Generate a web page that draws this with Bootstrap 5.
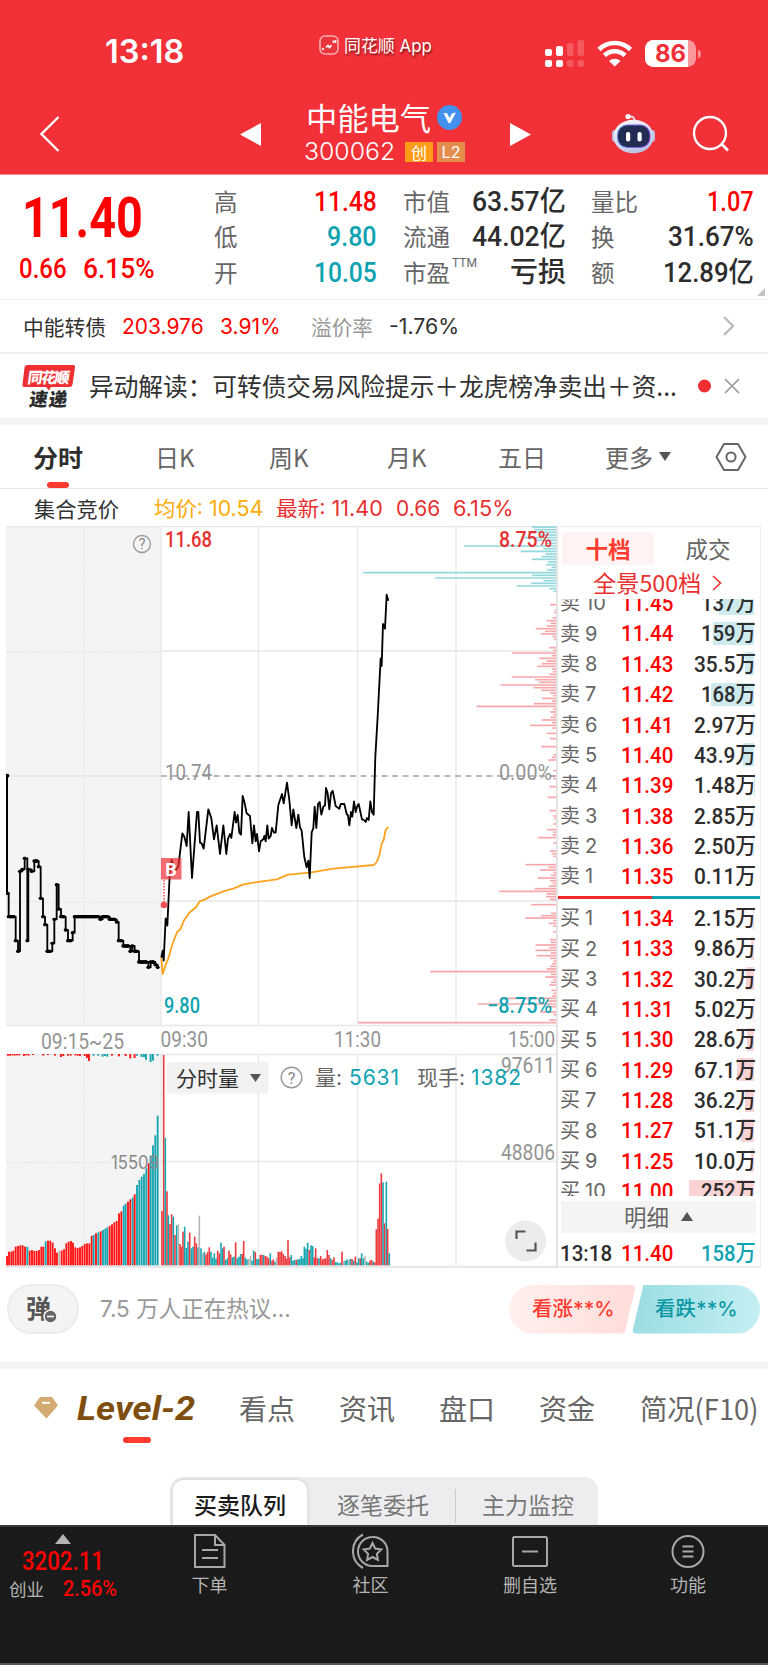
<!DOCTYPE html>
<html lang="zh-CN">
<head>
<meta charset="utf-8">
<meta name="viewport" content="width=device-width, initial-scale=1">
<title>中能电气 300062</title>
<link href="https://cdn.jsdelivr.net/npm/bootstrap@5.3.0/dist/css/bootstrap.min.css" rel="stylesheet">
<style>
:root{--up:#ff0000;--dn:#0fa3b1;--ink:#323232;--mut:#666}
body{font-family:"Noto Sans CJK SC",sans-serif;color:var(--ink);width:768px;height:1665px;overflow:hidden;background:#fff;line-height:1}
svg{display:block;flex:none}
.num{font-family:Roboto,"Noto Sans CJK SC",sans-serif;font-weight:500}
.sf{font-family:Inter,"Noto Sans CJK SC",sans-serif}
.up{color:var(--up)}.dn{color:var(--dn)}.soft{color:#e93030}.mut{color:var(--mut)}.ink{color:#2d2d2d}
[data-w]{display:inline-block;white-space:nowrap;transform-origin:0 50%}
/* header */
.top{background:#f23038;height:175px;border-bottom:1px solid #f98b8f;color:#fff}
.status{height:92px;padding:13px 0 0 105px}
.clock{font-size:32.5px;font-weight:600}
.appname{font-size:17.5px;text-shadow:1px 2px 2px #0007;margin-top:-14px}
.navline{height:82px;padding:2px 0 0 40px}
.title{font-size:31px;line-height:36px}
.codeline{font-size:24px;line-height:24px;margin-top:5px}
.tag{width:28px;height:20px;font-size:16px;background:#ff9c1a;line-height:20px;text-align:center}
.tag.l2{background:#e48d4c}
/* quote */
.quote{height:125px;border-bottom:1px solid #f1f1f1;display:grid;grid-template-columns:214px 189px 188px 177px;position:relative}
.big{font-size:56px;font-weight:700;line-height:55px;margin:16px 0 0 22px}
.chg{font-size:28.5px;margin:9px 0 0 19px}
.cells{padding-top:8.5px}
.cell{height:35.5px;display:flex;align-items:center;justify-content:space-between;font-size:23.5px;line-height:35px}
.cell .num{font-size:28.5px}
.cell .num i{font-style:normal;font-size:28px}
.ttm{font-size:12px;font-family:Roboto;margin:-18px auto 0 2px}
.fold{position:absolute;right:3px;bottom:3px;border:4.5px solid #c4c4c4;border-top-color:transparent;border-left-color:transparent}
.bond{height:54px;border-bottom:2px solid #efefef;font-size:21px;padding-left:23px;display:grid;grid-template-columns:99px 98px 91px 78px 334px auto;align-items:center}
.news{height:64px;padding-left:22px;font-size:24.5px}
.band{height:7px;background:#f4f4f4}
/* chart tabs */
.ctabs{height:64px;border-bottom:1px solid #e9e9e9;padding-left:33px;font-size:24px;display:grid;grid-template-columns:122px 114px 118px 111px 107px 110px auto;align-items:center;color:var(--mut);position:relative}
.ctabs .bar,.ltabs .bar{position:absolute;background:#ff3b30;border-radius:3px;height:6px}
.ctabs .bar{left:47px;bottom:0;width:22px}
.avgline{height:37px;padding:1px 0 0 34px;font-size:21px;display:grid;grid-template-columns:120px 122px 120px 57px auto;align-items:center}
/* board */
.board{height:742px;padding-left:6px}
.book{width:205px;height:742px;border:2px solid #ececec;border-left-color:#e4e4e4;border-width:1px 1px 2px 2px}
.bt{height:41px;padding:5px 5px 0 4px}
.bt span{width:92px;height:33px;border-radius:4px;font-size:22.5px;display:flex;align-items:center;justify-content:center}
.bt .on{background:#fff3f3;color:#ff3b30;font-weight:700}
.pano{height:31px;font-size:23px;padding:0 0 2px 35px}
.side{overflow:hidden}
.sell{height:297px}.sell>div{margin-top:-10.8px}
.buy{height:297px;padding-top:4px}
.lv{height:30.35px;display:grid;grid-template-columns:25px 36px 1fr;padding:0 4px 0 2px;align-items:center;position:relative;font-size:20px;color:var(--mut)}
.lv>span:nth-child(2){margin-top:-2px}
.lv .num{font-size:22.5px;position:relative}
.lv b{font-weight:500;color:#2d2d2d;justify-self:end;position:relative}
.dep{position:absolute;right:6px;top:3.5px;height:23px}
.ratio{height:3px;background:linear-gradient(90deg,#f0282e 46.7%,#0fa3b1 0)}
.detail{height:32px;background:#f4f4f4;margin:5px 4px 0 3px;padding-bottom:1px;font-size:22.5px;color:var(--mut)}
/* comments */
.talk{height:94px;padding:0 8px 12px 7px;color:#999;font-size:23px}
.dan{width:72px;height:50px;border-radius:25px;background:#f4f4f4;border:2px solid #ececec;position:relative;color:#555;font-size:25px;font-weight:700;padding:0 0 3px 17px}
.dan svg{position:absolute;left:34px;top:23px}
.vote{height:49px;font-size:20.5px;font-weight:500}
.vu{width:127px;border-radius:25px 5px 5px 25px;background:linear-gradient(90deg,#fff0ee,#ffdcd9);color:#ff3b30;clip-path:polygon(0 0,100% 0,91% 100%,0 100%);padding-left:23px}
.vd{width:128px;margin-left:-4px;border-radius:5px 25px 25px 5px;background:linear-gradient(90deg,#9bdde2,#c4eff3);color:#0c97a5;clip-path:polygon(9% 0,100% 0,100% 100%,0 100%);padding-left:23px}
.ltabs{height:108px;padding:0 0 30px 34px;font-size:28px;color:var(--mut);display:grid;grid-template-columns:43px 162px 100px 100px 100px 101px auto;align-items:center;position:relative}
.ltabs .bar{left:123px;top:68px;width:28px;height:5.500px}
.lev{font:italic 700 33px Roboto,sans-serif;color:#7d4e10}
.seg{width:428px;height:48px;margin-left:170px;background:#ededef;border-radius:14px 14px 0 0;font-size:23px;color:#777;padding:3px 0 0 3px}
.seg .on{width:134px;height:45px;background:#fff;border-radius:11px 11px 0 0;color:#1c1c1c;font-weight:500;box-shadow:0 0 5px #0002}
.seg div{display:flex;align-items:center;padding-top:4px}
.foot{height:140px;background:#1a1a1a;border-top:2px solid #3a3a3a;border-bottom:2px solid #555;color:#b4b4b4;font-size:18px;display:grid;grid-template-columns:129px 161px 161px 158px 158px}
.foot>div+div{display:flex;flex-direction:column;align-items:center;padding-top:6px}
.foot svg{height:36px;margin-bottom:6px}
.idx svg{height:10px;margin:7px 0 0 55px}
.icn{fill:none;stroke:#a8a8a8;stroke-width:2}
</style>
</head>
<body>
<header class="top">
  <div class="status d-flex align-items-center">
    <span class="clock sf" data-w="79">13:18</span>
    <svg width="21" height="21" viewBox="0 0 21 21" style="margin:-15px 4px 0 135px"><rect x="1" y="1" width="18" height="18" rx="5" fill="#e8343a" stroke="#fff" stroke-opacity=".6" stroke-width="1.6"/><path d="M3 13.500l2 1M7 12.500l2-2 1.500 2 2-2.500M14.500 8v-2.500M16.500 8v-3" stroke="#fff" fill="none" stroke-width="1.7"/></svg>
    <span class="appname sf" data-w="88">同花顺 App</span>
    <svg width="160" height="30" viewBox="542 36 160 30" style="margin-left:110px">
      <g fill="#fff"><rect x="545" y="47" width="7" height="7" rx="2"/><rect x="556" y="44" width="7" height="10" rx="2"/><rect x="545" y="58" width="7" height="7" rx="2"/><rect x="556" y="58" width="7" height="7" rx="2"/></g>
      <g fill="#fff" opacity=".2"><rect x="567" y="41" width="6.500" height="13" rx="2"/><rect x="577.500" y="38" width="6.500" height="16" rx="2"/><rect x="567" y="58" width="6.500" height="7" rx="2"/><rect x="577.500" y="58" width="6.500" height="7" rx="2"/></g>
      <g fill="none" stroke="#fff" stroke-width="4.600"><path d="M599 47.500a22.500 22.500 0 0 1 31.500 0"/><path d="M604.500 53.500a14.500 14.500 0 0 1 20.500 0"/></g>
      <path d="M609 59a8.500 8.500 0 0 1 11.500 0l-5.700 5.500z" fill="#fff"/>
      <rect x="645" y="38" width="51" height="27" rx="8.500" fill="#fff" opacity=".5"/><path d="M653.500 38H688v27h-34.500a8.500 8.500 0 0 1-8.500-8.500v-10a8.500 8.500 0 0 1 8.500-8.500z" fill="#fff"/><path d="M698 48v8c2 0 2.800-2 2.800-4s-.8-4-2.800-4z" fill="#fff" opacity=".5"/>
      <text x="655" y="60.300" font-family="Inter" font-weight="700" font-size="24" textLength="31" lengthAdjust="spacingAndGlyphs" fill="#f23038">86</text>
    </svg>
  </div>
  <div class="navline d-flex align-items-center">
    <svg width="20" height="38" viewBox="0 0 20 38"><path d="M18.500 2L1.500 19l17 17" fill="none" stroke="#fff" stroke-width="2.300"/></svg>
    <svg width="21" height="23" style="margin-left:180px" viewBox="0 0 21 23"><path d="M0 11.500L21 0v23z" fill="#fff"/></svg>
    <div style="margin:-5px 0 0 45px;width:203px">
      <div class="title d-flex align-items-center"><span data-w="125">中能电气</span>
        <svg style="margin-left:6px" width="25" height="25" viewBox="0 0 25 25"><circle cx="12.500" cy="12.500" r="12.500" fill="#4390ee"/><path d="M6.500 8l3.500.3L12.700 13l2.200-4.500L19 7.500 13.300 18h-1.800z" fill="#fff"/></svg></div>
      <div class="codeline d-flex align-items-center"><span class="sf fw-light" style="margin-left:-2px" data-w="91">300062</span><span class="tag" style="margin-left:10px">创</span><span class="tag l2 sf" style="margin-left:4px">L2</span></div>
    </div>
    <svg width="21" height="23" style="margin-left:1px" viewBox="0 0 21 23"><path d="M21 11.500L0 0v23z" fill="#fff"/></svg>
    <svg width="44" height="42" viewBox="611 113 44 42" style="margin-left:80px"><defs><linearGradient id="rb" x2=".5" y2="1"><stop stop-color="#fff"/><stop offset="1" stop-color="#bcc4e6"/></linearGradient><linearGradient id="rf"><stop stop-color="#5b8ae0"/><stop offset="1" stop-color="#8e4be0"/></linearGradient></defs><path d="M628 116.500q7-1 6.500 5" stroke="#e6e2f4" stroke-width="1.800" fill="none"/><circle cx="628" cy="116.500" r="2.600" fill="#fff"/><rect x="612" y="130" width="6" height="12" rx="3" fill="#b9bfe0"/><rect x="649" y="130" width="6" height="12" rx="3" fill="#b9bfe0"/><ellipse cx="633.500" cy="136.500" rx="20" ry="16.800" fill="url(#rb)"/><rect x="617" y="124.500" width="33.500" height="23.500" rx="10.500" fill="url(#rf)"/><rect x="618" y="125.500" width="31.500" height="21.500" rx="9.500" fill="#222c52"/><rect x="626" y="132" width="4.200" height="9.500" rx="2" fill="#fff"/><rect x="637.500" y="132" width="4.200" height="9.500" rx="2" fill="#fff"/></svg>
    <svg width="38" height="38" viewBox="692 116 38 38" style="margin-left:37px"><circle cx="710" cy="134" r="16" fill="none" stroke="#fff" stroke-width="2.400"/><path d="M721 144.500l7 7" stroke="#fff" stroke-width="2.600"/></svg>
  </div>
</header>

<section class="quote">
  <div>
    <div class="big num up"><span data-w="121">11.40</span></div>
    <div class="chg num up d-flex"><span data-w="48">0.66</span><span data-w="72" style="margin-left:16px">6.15%</span></div>
  </div>
  <div class="cells" style="padding-right:26px">
    <div class="cell mut"><span>高</span><span class="num up" data-w="63">11.48</span></div>
    <div class="cell mut"><span>低</span><span class="num dn" data-w="50">9.80</span></div>
    <div class="cell mut"><span>开</span><span class="num dn" data-w="63">10.05</span></div>
  </div>
  <div class="cells" style="padding-right:25px">
    <div class="cell mut"><span>市值</span><span class="num ink" data-w="94">63.57<i>亿</i></span></div>
    <div class="cell mut"><span>流通</span><span class="num ink" data-w="94">44.02<i>亿</i></span></div>
    <div class="cell mut"><span>市盈</span><span class="ttm">TTM</span><span class="num ink"><i>亏损</i></span></div>
  </div>
  <div class="cells" style="padding-right:14px">
    <div class="cell mut"><span>量比</span><span class="num up" data-w="47">1.07</span></div>
    <div class="cell mut"><span>换</span><span class="num ink" data-w="86">31.67%</span></div>
    <div class="cell mut"><span>额</span><span class="num ink" data-w="91">12.89<i>亿</i></span></div>
  </div>
  <span class="fold"></span>
</section>

<section class="bond">
  <span data-w="83">中能转债</span><span class="sf up" data-w="82">203.976</span><span class="sf up" data-w="61">3.91%</span><span data-w="62" style="color:#999">溢价率</span><span class="sf" data-w="70">-1.76%</span>
  <svg width="12" height="26" viewBox="0 0 12 26"><path d="M1 4l9 9-9 9" fill="none" stroke="#bbb" stroke-width="2.400"/></svg>
</section>
<section class="news d-flex align-items-center">
  <svg width="54" height="45" viewBox="22 363 54 45"><path d="M27 364h46q2.500 0 2 2.500l-2.500 17q-.4 2.500-3 2.500H51l-2 3.500-3-3.500H24.500q-2.500 0-2-2.500l2-17q.3-2.500 2.500-2.500z" fill="#ee2f33"/><g font-family="Noto Sans CJK SC" font-weight="900"><text transform="translate(27 381.500) skewX(-8)" font-size="15" textLength="42" fill="#fff">同花顺</text><text transform="translate(28.500 405) skewX(-8)" font-size="18.500" textLength="38" fill="#2b2b2b">速递</text></g></svg>
  <span data-w="588" style="margin-left:13px">异动解读：可转债交易风险提示＋龙虎榜净卖出＋资...</span>
  <svg width="45" height="16" viewBox="697 378 45 16" style="margin-left:20px"><circle cx="704.500" cy="386" r="6.500" fill="#ee2f33"/><path d="M725 379l14 14M739 379l-14 14" stroke="#999" stroke-width="1.700"/></svg>
</section>
<div class="band"></div>

<nav class="ctabs">
  <span class="fw-bold" style="color:#2d2d2d" data-w="50">分时</span><span>日K</span><span>周K</span><span>月K</span><span>五日</span><span class="d-flex align-items-center">更多<svg style="margin-left:6px" width="12" height="9" viewBox="0 0 12 9"><path d="M0 0h12L6 9z" fill="#555"/></svg></span>
  <svg width="32" height="30" viewBox="0 0 32 30"><path d="M9 2h14l7.500 13L23 28H9L1.500 15z" fill="none" stroke="#666" stroke-width="2" stroke-linejoin="round"/><circle cx="16" cy="15" r="4.600" fill="none" stroke="#666" stroke-width="2"/></svg>
  <i class="bar"></i>
</nav>
<div class="avgline">
  <span data-w="85">集合竞价</span><span class="sf" style="color:#ffac0a" data-w="109">均价: 10.54</span><span class="sf soft" data-w="107">最新: 11.40</span><span class="sf soft" data-w="44">0.66</span><span class="sf soft" data-w="60">6.15%</span>
</div>

<main class="board d-flex">
  <svg width="550" height="742" viewBox="6 526 550 742" font-family="Roboto" id="chart">
    <rect x="6" y="526" width="155" height="500" fill="#f4f4f4"/><rect x="6" y="1054" width="155" height="213" fill="#f4f4f4"/>
    <g fill="none" stroke="#e8e8e8" stroke-width="1.300"><path d="M161 526.500H557M161 651H557M161 901H557M6 1025.500H557M6 1054.500H557M161 1161.500H557M6 776H161M161 526V1026M258.500 526V1026M357.500 526V1026M456 526V1026M161 1054V1267M258.500 1054V1267M357.500 1054V1267M456 1054V1267"/><path d="M6 1267H557" stroke-width="2.500"/><path d="M6 526.500H161"/><path stroke-dasharray="2 1.600" d="M84 526V1026M6 652H161M6 902H161M84 1054V1267M6 1162.500H161"/></g>
    <g id="depth" stroke-width="1.700"></g>
    <path d="M161 776H557" stroke="#a3a3a3" stroke-width="1.500" stroke-dasharray="6 4.500"/>
    <g id="vols"></g>
    <g font-size="21.500" fill="#949494">
      <text x="165" y="780" textLength="47" lengthAdjust="spacingAndGlyphs">10.74</text><text x="499" y="780" textLength="53" lengthAdjust="spacingAndGlyphs">0.00%</text>
      <text x="41" y="1048.500" textLength="83" lengthAdjust="spacingAndGlyphs">09:15~25</text><text x="160.500" y="1047" textLength="47.500" lengthAdjust="spacingAndGlyphs">09:30</text><text x="334" y="1047" textLength="47" lengthAdjust="spacingAndGlyphs">11:30</text><text x="508" y="1047" textLength="47" lengthAdjust="spacingAndGlyphs">15:00</text>
      <text x="501" y="1073" textLength="54" lengthAdjust="spacingAndGlyphs">97611</text><text x="501" y="1160" textLength="54" lengthAdjust="spacingAndGlyphs">48806</text>
      <text x="111" y="1168.500" font-family="Inter" font-size="18" textLength="48" lengthAdjust="spacingAndGlyphs" fill="#888">15509</text>
    </g>
    <g font-size="21.500" font-weight="500"><text x="165" y="546.500" textLength="47" lengthAdjust="spacingAndGlyphs" fill="#e93030">11.68</text><text x="499" y="546.500" textLength="53" lengthAdjust="spacingAndGlyphs" fill="#e93030">8.75%</text><text x="164" y="1013" textLength="36" lengthAdjust="spacingAndGlyphs" fill="#0fa3b1">9.80</text><text x="487" y="1013" textLength="65" lengthAdjust="spacingAndGlyphs" fill="#0fa3b1">−8.75%</text></g>
    <circle cx="142" cy="544" r="8.500" fill="none" stroke="#999" stroke-width="1.300"/><text x="142" y="549" font-size="14" text-anchor="middle" fill="#888">?</text>
    <g transform="translate(0 740) scale(.33333)" fill="none" stroke-linejoin="round">
      <path d="M21 107V460" stroke="#000" stroke-width="6"/><circle cx="22" cy="107" r="6" fill="#000"/>
      <g id="auction" stroke="#000"></g>
      <path stroke="#ffa21f" stroke-width="5.500" d="M484 655L488 702L495 680L505 655L518 610L532 575L541 568L551 543L568 518L588 502L598 485L615 478L630 470L670 454L700 446L728 434L765 427L830 418L865 404L930 398L1000 386L1122 375L1130 366L1138 345L1146 308L1151 300L1157 270L1162 264L1166 262"/>
      <path stroke="#000" stroke-width="5.500" d="M484 653L488 632L491 662L497 535L502 557L510 385L515 360L525 392L535 380L547 280L553 290L560 318L566 216L576 414L591 216H595L600 308L605 310L611 326L625 208L634 235L642 298L650 256L660 342L670 256L679 342L684 296L690 282L694 294L704 216L708 248L713 225L718 278L723 284L728 168L733 185L740 220L750 228L757 310L762 256L767 304L771 282L777 334L782 304L790 298L793 288L797 304L802 256L806 296L812 288L816 264L822 278H827L835 195L846 162L851 190L861 128L868 180L875 256L880 208L889 264L895 224L900 262L905 272L913 352L920 382L925 362L929 414L935 278L940 264L944 200L949 264L954 192L959 186L964 224L970 200L975 196L978 144L983 160L988 208L993 160L998 152L1007 198L1018 206L1022 192H1033L1040 222L1044 226L1048 256L1053 216L1057 230L1062 184L1067 216L1071 200L1076 192L1086 238L1092 240L1097 246L1101 234L1106 240L1111 184L1116 216L1121 224L1126 50L1133 -70L1142 -245L1145 -222L1149 -348L1155 -334L1160 -436L1165 -418"/>
    </g>
    <path d="M164 880v22" stroke="#f05256" stroke-width="1.600" stroke-dasharray="1.500 1.500"/><circle cx="164" cy="905" r="3.300" fill="#f05256"/>
    <rect x="161" y="858" width="20.500" height="21.500" fill="#ee2f33" opacity=".7"/><text x="171" y="875.500" font-size="18" font-weight="700" fill="#fff" text-anchor="middle">B</text>
    <rect x="167" y="1062" width="101.500" height="31.500" rx="3" fill="#f2f2f2"/><text x="176" y="1085.500" font-family="Noto Sans CJK SC" font-size="21" fill="#323232">分时量</text><path d="M250 1074h11l-5.500 8z" fill="#555"/>
    <circle cx="291.500" cy="1077.500" r="10.300" fill="none" stroke="#999" stroke-width="1.400"/><text x="291.500" y="1083.500" font-size="16" text-anchor="middle" fill="#888">?</text>
    <g font-family="Inter,Noto Sans CJK SC" font-size="21" fill="#666"><text x="315" y="1085" textLength="27">量:</text><text x="349" y="1085" fill="#0fa3b1" textLength="50">5631</text><text x="417" y="1085" textLength="48">现手:</text><text x="471" y="1085" fill="#0fa3b1" textLength="50">1382</text></g>
    <circle cx="525.700" cy="1241" r="20.500" fill="#ececec"/><path d="M516.500 1239v-7.500h9M535.500 1242.500v8h-9" fill="none" stroke="#555" stroke-width="2.200"/>
  </svg>
  <aside class="book">
    <div class="bt d-flex"><span class="on">十档</span><span class="mut ms-2">成交</span></div>
    <div class="pano soft d-flex align-items-center"><span data-w="108">全景500档</span><svg style="margin-left:11px" width="10" height="16" viewBox="0 0 10 16"><path d="M1 1l7.500 7L1 15" fill="none" stroke="#e93030" stroke-width="1.600"/></svg></div>
    <div class="side sell"><div id="sell"></div></div>
    <div class="ratio"></div>
    <div class="side buy"><div id="buy"></div></div>
    <div class="detail d-flex align-items-center justify-content-center">明细<svg style="margin-left:12px" width="12" height="9" viewBox="0 0 12 9"><path d="M0 9h12L6 0z" fill="#555"/></svg></div>
    <div class="lv" style="grid-template-columns:61px 1fr auto;margin-top:5px"><span class="num ink" data-w="52">13:18</span><span class="num up m-0" data-w="52">11.40</span><span class="num dn" data-w="55">158万</span></div>
  </aside>
</main>

<section class="talk d-flex align-items-center">
  <div class="dan d-flex align-items-center">弹<svg width="15" height="15" viewBox="0 0 15 15"><circle cx="7.500" cy="7.500" r="6.500" fill="#666" stroke="#f4f4f4" stroke-width="1.500"/><path d="M4 7.500h7" stroke="#fff" stroke-width="1.600"/></svg></div>
  <span class="sf" style="margin-left:21px" data-w="191">7.5 万人正在热议...</span>
  <div class="d-flex ms-auto"><div class="vote vu d-flex align-items-center"><span class="sf" data-w="83">看涨**%</span></div><div class="vote vd d-flex align-items-center"><span class="sf" data-w="83">看跌**%</span></div></div>
</section>
<div class="band"></div>
<nav class="ltabs">
  <svg width="24" height="22" viewBox="0 0 24 22"><path d="M6 0h12l6 8.500L12.500 21.500 0 8.500z" fill="#d3ab72"/><path d="M8 5.800h8" stroke="#fff" stroke-width="2"/></svg>
  <span class="lev" data-w="118">Level-2</span><span>看点</span><span>资讯</span><span>盘口</span><span>资金</span><span data-w="118">简况(F10)</span>
  <i class="bar"></i>
</nav>
<div class="seg d-flex">
  <div class="on justify-content-center">买卖队列</div><div style="margin-left:30px">逐笔委托</div><svg width="1" height="34" style="margin:9px 26px 0 26px"><path d="M.5 0v34" stroke="#ccc"/></svg><div>主力监控</div>
</div>
<footer class="foot">
  <div class="idx"><svg width="16" height="10" viewBox="0 0 16 10"><path d="M0 10h16L8 0z" fill="#b4b4b4"/></svg>
    <div class="num up" style="font-size:26px;margin:4px 0 0 22px"><span data-w="82">3202.11</span></div>
    <div class="d-flex align-items-center" style="margin:3px 0 0 9px;font-size:17.5px;height:24px"><span>创业</span><span class="num up" style="font-size:22px;margin-left:19px" data-w="54">2.56%</span></div></div>
  <div><svg class="icn" width="32" viewBox="0 0 32 36"><path d="M1 2h20l9.500 10V34H1zM21 2v10h9.500M8 17h16M8 25h16"/></svg>下单</div>
  <div><svg class="icn" width="38" viewBox="0 0 38 36"><path d="M20.500 4a14.500 14.500 0 0 1 15 14.500V33H20.500a14.500 14.500 0 0 1 0-29zM11 1.500a19 19 0 0 0 0 33.500M20.500 10l2.700 5.600 6.100.9-4.400 4.300 1 6.100-5.400-2.900-5.400 2.900 1-6.100-4.400-4.300 6.100-.9z"/></svg>社区</div>
  <div><svg class="icn" width="36" viewBox="0 0 36 36"><rect x="1" y="4" width="34" height="29" rx="1.500"/><path d="M10 18.500h16"/></svg>删自选</div>
  <div><svg class="icn" width="34" viewBox="0 0 34 36"><circle cx="17" cy="18.500" r="15.500"/><path d="M11.500 13.500h11M11.500 18.500h11M11.500 23.500h11"/></svg>功能</div>
</footer>

<script src="https://cdn.jsdelivr.net/npm/bootstrap@5.3.0/dist/js/bootstrap.bundle.min.js"></script>
<script>
const UP='#ee3a3e', DN='#17a5b0', GR='#b5b5b5';
// order book levels: label, price, volume
const sell=[['10','11.45','137'],['9','11.44','159'],['8','11.43','35.5'],['7','11.42','168'],['6','11.41','2.97'],['5','11.40','43.9'],['4','11.39','1.48'],['3','11.38','2.85'],['2','11.36','2.50'],['1','11.35','0.11']];
const buy=[['1','11.34','2.15'],['2','11.33','9.86'],['3','11.32','30.2'],['4','11.31','5.02'],['5','11.30','28.6'],['6','11.29','67.1'],['7','11.28','36.2'],['8','11.27','51.1'],['9','11.25','10.0'],['10','11.00','252']];
const rows=(a,t,c)=>a.map(([n,p,v])=>`<div class="lv"><i class="dep" style="width:${(v*.259).toFixed(1)}px;background:${c}"></i><span>${t}</span><span class="sf">${n}</span><span class="d-flex justify-content-between"><span class="num up" data-w="52">${p}</span><b class="num" data-w="${v.length==3?55:62}">${v}万</b></span></div>`).join('');
document.getElementById('sell').innerHTML=rows(sell,'卖','#cdebef');
document.getElementById('buy').innerHTML=rows(buy,'买','#fad3d5');

// call auction: stepped line with a dot at each match
const A='23,460 26,530 33,530 40,530 47,602 54,634 60,394 67,388 74,355 82,602 85,388 95,394 103,363 110,363 116,380 122,475 129,530 135,554 142,634 150,634 157,610 163,538 170,434 176,507 183,530 190,530 197,570 204,602 211,602 218,578 224,530 231,530 238,530 245,530 252,530 259,530 266,530 273,530 280,530 287,530 294,530 301,538 308,530 315,530 322,530 329,538 336,538 343,538 350,546 356,602 363,602 370,618 377,618 384,618 391,634 397,618 404,634 411,634 417,666 424,666 431,666 438,666 445,682 452,666 459,666 466,674 473,682'.split(' ').map(p=>p.split(','));
document.getElementById('auction').innerHTML=`<path stroke-width="5.5" d="M${A[0]}${A.slice(1).map(([x,y])=>`H${x}V${y}`).join('')}"/>`+A.map(([x,y],i)=>`<path stroke-width="10" stroke-linecap="round" d="M${x-1} ${y}h${A[i+1]&&A[i+1][1]==y?8:2}"/>`).join('');

// resting volume at each price: top y / left x in thirds of a pixel
const L=(s,ox,oy,c)=>s.split(' ').map(p=>{const[y,x]=p.split(':');return `<path d="M${ox+x/3} ${oy+y/3}H556" stroke="${c}"/>`}).join('');
document.getElementById('depth').innerHTML=
 L('351:455 359:462 367:470 375:480 383:430 391:470 400:500 408:253 416:490 424:422 432:497 440:485 448:455 456:505 464:498 472:515 480:502 488:-50 496:457 504:165 512:490 520:453 528:410 536:508 544:520',380,410,'#92d8dc')+
 L('584:510 600:524 608:522 624:518 632:500 640:512 648:500 656:467 664:495 672:482 680:518 688:522 713:507 721:520 729:395 737:515 745:478 753:500 761:485 769:472 777:515 785:520 793:508 801:395 809:465 817:478 825:362 833:460 841:484 849:510 857:520 865:486 873:515 881:462 889:290',380,410,'#f9a7aa')+
 L('448:640 456:630 464:640 472:632 480:605 488:635 496:570 504:638 520:620 536:630 560:603 584:640 592:636 600:625 632:640 648:630 656:640 680:628 712:622 752:628 768:640 776:643 792:640 809:622 817:640 825:638 833:594 849:640 873:630 881:636 889:640 914:556 922:625 930:600 938:640 946:632 954:594 962:630 970:638 978:628 986:584 994:478 1002:620 1010:618 1018:630 1034:573',340,560,'#f9a7aa')+
 L('70:633 77:603 84:555 92:640 100:626 108:640 125:640 149:630 157:632 165:587 173:628 181:586 189:632 197:590 205:630 213:640 221:636 229:630 237:620 245:270 253:632 261:616 269:640 277:632 285:628 301:634 310:640 318:636 325:485 333:620 342:413 350:620 366:600 374:640 390:628 398:54',340,890,'#f9a7aa');

// traded volume per minute, x:top+colour
const V=(s,w,red,teal)=>s.split(' ').map(p=>{const[x,t]=p.split(':'),c=t.slice(-1),y=+t.slice(0,-1);return `<rect x="${(x-w/2)/3}" y="${1040+y/3}" width="${w/3}" height="${(676-y)/3}" fill="${c=='r'?red:c=='t'?teal:GR}"/>`}).join('');
let h=V('21:648r 27:635r 34:635r 40:632r 47:620r 54:618r 61:616r 68:616r 75:620r 82:620t 89:632r 96:630r 103:633r 110:633r 117:630r 124:620r 130:620r 137:604t 144:602r 151:602r 158:608r 165:625r 171:638r 178:632g 185:632r 192:628r 199:610r 206:605r 213:603r 219:608r 226:622r 233:624r 240:622r 247:618r 254:612r 261:610r 268:610r 275:588r 281:585t 288:580r 295:577t 302:574r 309:570t 316:566t 322:562t 329:558r 336:553r 343:547r 350:543r 357:520r 364:514r 371:497t 377:491t 384:485r 391:478r 398:473t 404:463r 411:435t 418:420t 425:410t 432:402t 439:385t 446:370r 452:347t 459:316t 466:286t 473:227t',5.6,'#ff1414','#17a5b0');
h+=V('486:513r 491:45r 496:294t 501:454r 505:526t 510:552r 515:523r 520:530t 525:585r 530:556t 535:552g 540:612r 544:620r 549:575r 554:560t 559:624t 564:605t 569:578r 574:625t 579:620t 584:590r 589:610r 594:622t 598:527g 603:625t 608:640g 613:636t 618:643r 623:636r 628:622r 633:636t 638:653t 643:640t 648:656t 653:632r 658:640r 663:608t 668:625t 672:620r 677:660t 682:655t 687:632r 692:643r 697:652t 702:650t 707:607r 712:655t 717:650t 722:642t 727:642r 731:603r 736:653t 741:658t 746:657g 751:648g 756:662t 761:632t 766:636r 771:657t 776:657t 781:645r 786:644r 791:645t 796:648r 801:650r 806:655r 811:640t 816:662r 820:658r 825:665t 830:652g 835:635r 840:636r 845:634r 850:642r 855:648r 859:656r 864:600r 869:652r 874:645t 879:662t 884:660t 889:660r 894:658t 899:657t 904:648t 909:655t 913:620t 918:626t 923:608t 928:630r 933:616t 938:618t 943:652r 947:625r 952:655r 957:655t 962:648r 967:658r 972:656r 977:655r 982:630r 987:645r 992:655t 997:660r 1002:652r 1007:666t 1012:667t 1017:670t 1022:668t 1026:635r 1031:663g 1036:662t 1041:658t 1046:660g 1051:657t 1056:657r 1061:662t 1066:650r 1071:667t 1076:655t 1081:655r 1085:640t 1090:655t 1095:648g 1100:665t 1105:668t 1110:662r 1115:660r 1120:665t 1124:667r 1129:568r 1134:536r 1139:430r 1144:400r 1149:427t 1154:550r 1159:425t 1163:567r 1168:640t',4.8,UP,DN);
// unmatched auction volume hanging from the top edge
h+='24:5r 30:5r 37:4r 44:5r 51:4r 58:4r 72:6r 79:4r 86:5r 99:3r 130:5r 144:3r 165:5r 183:9r 190:6r 204:5r 212:5r 226:4r 233:5r 240:6r 254:6r 261:12r 267:21r 281:5t 295:5t 308:8t 315:6t 322:8t 336:5r 357:7r 377:6r 391:13r 404:12r 411:5t 425:9t 432:9t 438:17t 452:24t 459:20t 473:5t'.split(' ').map(p=>{const[x,t]=p.split(':');return `<rect x="${x/3-1}" y="1054" width="1.9" height="${parseInt(t)/3}" fill="${t.endsWith('r')?'#ff1414':DN}"/>`}).join('');
document.getElementById('vols').innerHTML=h;

// condense text runs to their column width
document.querySelectorAll('[data-w]').forEach(e=>{
  e.style.justifySelf='start';
  e.style.flex='none';
  const n=e.offsetWidth,w=+e.dataset.w;
  e.style.width=n+'px';
  e.style.transform=`scaleX(${w/n})`;e.style.marginRight=(w-n)+'px';
});
</script>
</body>
</html>
